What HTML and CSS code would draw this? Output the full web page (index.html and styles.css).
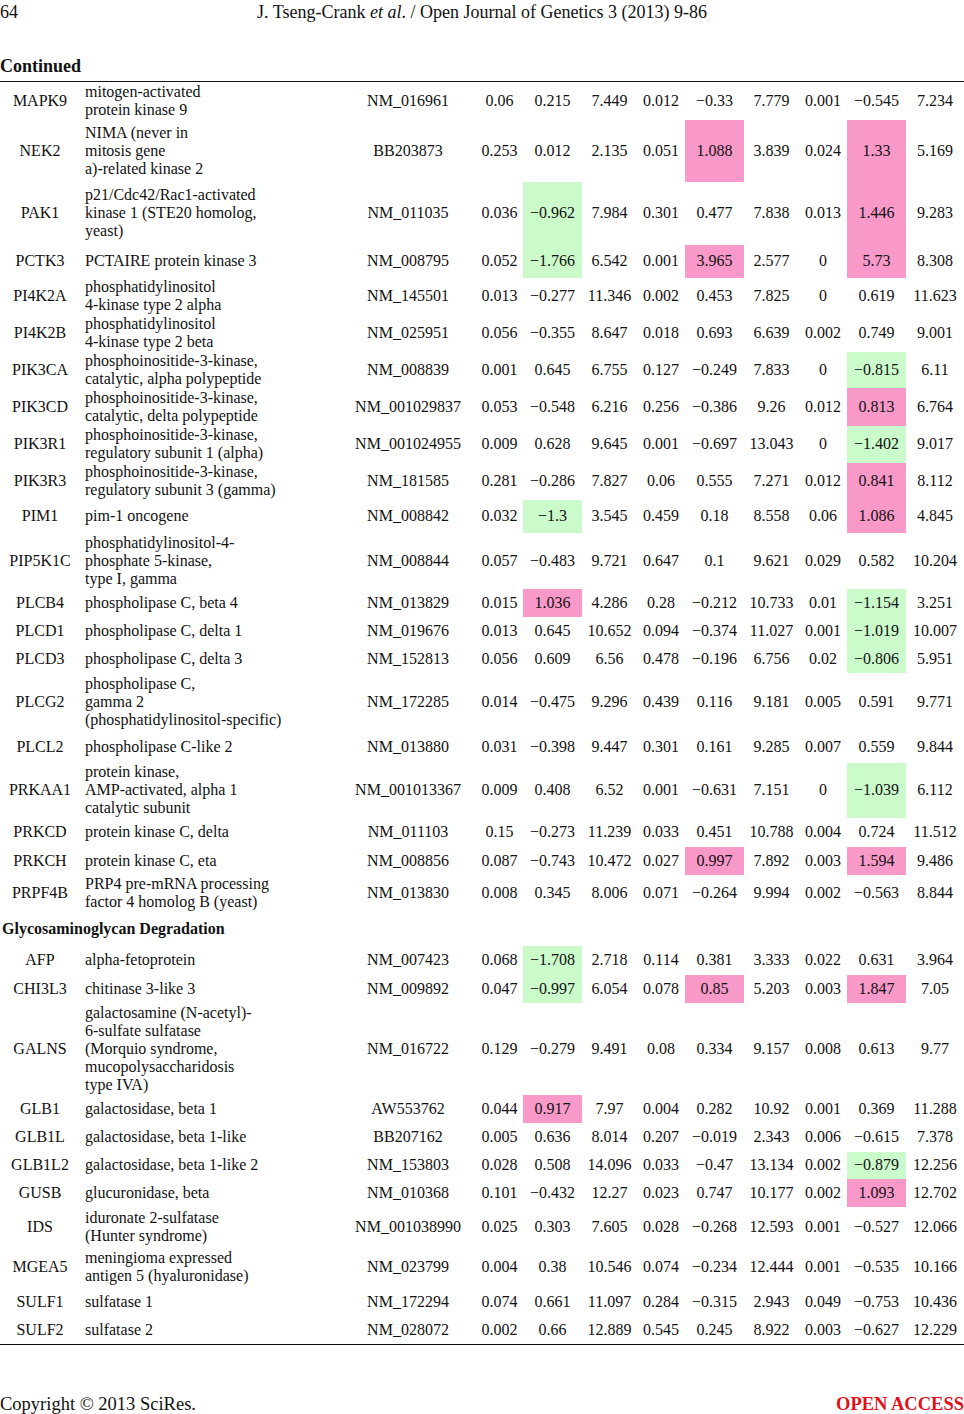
FILE: index.html
```html
<!DOCTYPE html>
<html lang="en">
<head>
<meta charset="utf-8">
<title>J. Tseng-Crank et al. / Open Journal of Genetics 3 (2013) 9-86</title>
<link rel="stylesheet" href="styles.css">
</head>
<body>
<header class="running-head">
  <span class="page-no">64</span>
  <span class="journal">J. Tseng-Crank <i>et al</i>. / Open Journal of Genetics 3 (2013) 9-86</span>
  <span></span>
</header>
<div class="caption">Continued</div>
<table class="data">
  <colgroup>
    <col class="c-gene"><col class="c-desc"><col class="c-acc"><col class="c-v1">
    <col class="c-v2"><col class="c-v3"><col class="c-v4"><col class="c-v5">
    <col class="c-v6"><col class="c-v7"><col class="c-v8"><col class="c-v9">
  </colgroup>
  <tbody>
    <tr class="h38"><td class="gene">MAPK9</td><td class="desc">mitogen-activated<br>protein kinase 9</td><td>NM_016961</td><td class="v1">0.06</td><td>0.215</td><td>7.449</td><td>0.012</td><td>−0.33</td><td>7.779</td><td>0.001</td><td>−0.545</td><td>7.234</td></tr>
    <tr class="h62"><td class="gene">NEK2</td><td class="desc">NIMA (never in<br>mitosis gene<br>a)-related kinase 2</td><td>BB203873</td><td class="v1">0.253</td><td>0.012</td><td>2.135</td><td>0.051</td><td class="up">1.088</td><td>3.839</td><td>0.024</td><td class="up">1.33</td><td>5.169</td></tr>
    <tr class="h63"><td class="gene">PAK1</td><td class="desc">p21/Cdc42/Rac1-activated<br>kinase 1 (STE20 homolog,<br>yeast)</td><td>NM_011035</td><td class="v1">0.036</td><td class="dn">−0.962</td><td>7.984</td><td>0.301</td><td>0.477</td><td>7.838</td><td>0.013</td><td class="up">1.446</td><td>9.283</td></tr>
    <tr class="h33"><td class="gene">PCTK3</td><td class="desc">PCTAIRE protein kinase 3</td><td>NM_008795</td><td class="v1">0.052</td><td class="dn">−1.766</td><td>6.542</td><td>0.001</td><td class="up">3.965</td><td>2.577</td><td>0</td><td class="up">5.73</td><td>8.308</td></tr>
    <tr class="h37"><td class="gene">PI4K2A</td><td class="desc">phosphatidylinositol<br>4-kinase type 2 alpha</td><td>NM_145501</td><td class="v1">0.013</td><td>−0.277</td><td>11.346</td><td>0.002</td><td>0.453</td><td>7.825</td><td>0</td><td>0.619</td><td>11.623</td></tr>
    <tr class="h37"><td class="gene">PI4K2B</td><td class="desc">phosphatidylinositol<br>4-kinase type 2 beta</td><td>NM_025951</td><td class="v1">0.056</td><td>−0.355</td><td>8.647</td><td>0.018</td><td>0.693</td><td>6.639</td><td>0.002</td><td>0.749</td><td>9.001</td></tr>
    <tr class="h36"><td class="gene">PIK3CA</td><td class="desc">phosphoinositide-3-kinase,<br>catalytic, alpha polypeptide</td><td>NM_008839</td><td class="v1">0.001</td><td>0.645</td><td>6.755</td><td>0.127</td><td>−0.249</td><td>7.833</td><td>0</td><td class="dn">−0.815</td><td>6.11</td></tr>
    <tr class="h38"><td class="gene">PIK3CD</td><td class="desc">phosphoinositide-3-kinase,<br>catalytic, delta polypeptide</td><td>NM_001029837</td><td class="v1">0.053</td><td>−0.548</td><td>6.216</td><td>0.256</td><td>−0.386</td><td>9.26</td><td>0.012</td><td class="up">0.813</td><td>6.764</td></tr>
    <tr class="h37"><td class="gene">PIK3R1</td><td class="desc">phosphoinositide-3-kinase,<br>regulatory subunit 1 (alpha)</td><td>NM_001024955</td><td class="v1">0.009</td><td>0.628</td><td>9.645</td><td>0.001</td><td>−0.697</td><td>13.043</td><td>0</td><td class="dn">−1.402</td><td>9.017</td></tr>
    <tr class="h37"><td class="gene">PIK3R3</td><td class="desc">phosphoinositide-3-kinase,<br>regulatory subunit 3 (gamma)</td><td>NM_181585</td><td class="v1">0.281</td><td>−0.286</td><td>7.827</td><td>0.06</td><td>0.555</td><td>7.271</td><td>0.012</td><td class="up">0.841</td><td>8.112</td></tr>
    <tr class="h33"><td class="gene">PIM1</td><td class="desc">pim-1 oncogene</td><td>NM_008842</td><td class="v1">0.032</td><td class="dn">−1.3</td><td>3.545</td><td>0.459</td><td>0.18</td><td>8.558</td><td>0.06</td><td class="up">1.086</td><td>4.845</td></tr>
    <tr class="h56"><td class="gene">PIP5K1C</td><td class="desc">phosphatidylinositol-4-<br>phosphate 5-kinase,<br>type I, gamma</td><td>NM_008844</td><td class="v1">0.057</td><td>−0.483</td><td>9.721</td><td>0.647</td><td>0.1</td><td>9.621</td><td>0.029</td><td>0.582</td><td>10.204</td></tr>
    <tr class="h28"><td class="gene">PLCB4</td><td class="desc">phospholipase C, beta 4</td><td>NM_013829</td><td class="v1">0.015</td><td class="up">1.036</td><td>4.286</td><td>0.28</td><td>−0.212</td><td>10.733</td><td>0.01</td><td class="dn">−1.154</td><td>3.251</td></tr>
    <tr class="h28"><td class="gene">PLCD1</td><td class="desc">phospholipase C, delta 1</td><td>NM_019676</td><td class="v1">0.013</td><td>0.645</td><td>10.652</td><td>0.094</td><td>−0.374</td><td>11.027</td><td>0.001</td><td class="dn">−1.019</td><td>10.007</td></tr>
    <tr class="h28"><td class="gene">PLCD3</td><td class="desc">phospholipase C, delta 3</td><td>NM_152813</td><td class="v1">0.056</td><td>0.609</td><td>6.56</td><td>0.478</td><td>−0.196</td><td>6.756</td><td>0.02</td><td class="dn">−0.806</td><td>5.951</td></tr>
    <tr class="h58"><td class="gene">PLCG2</td><td class="desc">phospholipase C,<br>gamma 2<br>(phosphatidylinositol-specific)</td><td>NM_172285</td><td class="v1">0.014</td><td>−0.475</td><td>9.296</td><td>0.439</td><td>0.116</td><td>9.181</td><td>0.005</td><td>0.591</td><td>9.771</td></tr>
    <tr class="h32"><td class="gene">PLCL2</td><td class="desc">phospholipase C-like 2</td><td>NM_013880</td><td class="v1">0.031</td><td>−0.398</td><td>9.447</td><td>0.301</td><td>0.161</td><td>9.285</td><td>0.007</td><td>0.559</td><td>9.844</td></tr>
    <tr class="h55"><td class="gene">PRKAA1</td><td class="desc">protein kinase,<br>AMP-activated, alpha 1<br>catalytic subunit</td><td>NM_001013367</td><td class="v1">0.009</td><td>0.408</td><td>6.52</td><td>0.001</td><td>−0.631</td><td>7.151</td><td>0</td><td class="dn">−1.039</td><td>6.112</td></tr>
    <tr class="h29"><td class="gene">PRKCD</td><td class="desc">protein kinase C, delta</td><td>NM_011103</td><td class="v1">0.15</td><td>−0.273</td><td>11.239</td><td>0.033</td><td>0.451</td><td>10.788</td><td>0.004</td><td>0.724</td><td>11.512</td></tr>
    <tr class="h28"><td class="gene">PRKCH</td><td class="desc">protein kinase C, eta</td><td>NM_008856</td><td class="v1">0.087</td><td>−0.743</td><td>10.472</td><td>0.027</td><td class="up">0.997</td><td>7.892</td><td>0.003</td><td class="up">1.594</td><td>9.486</td></tr>
    <tr class="h37"><td class="gene">PRPF4B</td><td class="desc">PRP4 pre-mRNA processing<br>factor 4 homolog B (yeast)</td><td>NM_013830</td><td class="v1">0.008</td><td>0.345</td><td>8.006</td><td>0.071</td><td>−0.264</td><td>9.994</td><td>0.002</td><td>−0.563</td><td>8.844</td></tr>
    <tr class="h34 section"><td colspan="12">Glycosaminoglycan Degradation</td></tr>
    <tr class="h29"><td class="gene">AFP</td><td class="desc">alpha-fetoprotein</td><td>NM_007423</td><td class="v1">0.068</td><td class="dn">−1.708</td><td>2.718</td><td>0.114</td><td>0.381</td><td>3.333</td><td>0.022</td><td>0.631</td><td>3.964</td></tr>
    <tr class="h28"><td class="gene">CHI3L3</td><td class="desc">chitinase 3-like 3</td><td>NM_009892</td><td class="v1">0.047</td><td class="dn">−0.997</td><td>6.054</td><td>0.078</td><td class="up">0.85</td><td>5.203</td><td>0.003</td><td class="up">1.847</td><td>7.05</td></tr>
    <tr class="h92"><td class="gene">GALNS</td><td class="desc">galactosamine (N-acetyl)-<br>6-sulfate sulfatase<br>(Morquio syndrome,<br>mucopolysaccharidosis<br>type IVA)</td><td>NM_016722</td><td class="v1">0.129</td><td>−0.279</td><td>9.491</td><td>0.08</td><td>0.334</td><td>9.157</td><td>0.008</td><td>0.613</td><td>9.77</td></tr>
    <tr class="h28"><td class="gene">GLB1</td><td class="desc">galactosidase, beta 1</td><td>AW553762</td><td class="v1">0.044</td><td class="up">0.917</td><td>7.97</td><td>0.004</td><td>0.282</td><td>10.92</td><td>0.001</td><td>0.369</td><td>11.288</td></tr>
    <tr class="h29"><td class="gene">GLB1L</td><td class="desc">galactosidase, beta 1-like</td><td>BB207162</td><td class="v1">0.005</td><td>0.636</td><td>8.014</td><td>0.207</td><td>−0.019</td><td>2.343</td><td>0.006</td><td>−0.615</td><td>7.378</td></tr>
    <tr class="h27"><td class="gene">GLB1L2</td><td class="desc">galactosidase, beta 1-like 2</td><td>NM_153803</td><td class="v1">0.028</td><td>0.508</td><td>14.096</td><td>0.033</td><td>−0.47</td><td>13.134</td><td>0.002</td><td class="dn">−0.879</td><td>12.256</td></tr>
    <tr class="h28"><td class="gene">GUSB</td><td class="desc">glucuronidase, beta</td><td>NM_010368</td><td class="v1">0.101</td><td>−0.432</td><td>12.27</td><td>0.023</td><td>0.747</td><td>10.177</td><td>0.002</td><td class="up">1.093</td><td>12.702</td></tr>
    <tr class="h40"><td class="gene">IDS</td><td class="desc">iduronate 2-sulfatase<br>(Hunter syndrome)</td><td>NM_001038990</td><td class="v1">0.025</td><td>0.303</td><td>7.605</td><td>0.028</td><td>−0.268</td><td>12.593</td><td>0.001</td><td>−0.527</td><td>12.066</td></tr>
    <tr class="h41"><td class="gene">MGEA5</td><td class="desc">meningioma expressed<br>antigen 5 (hyaluronidase)</td><td>NM_023799</td><td class="v1">0.004</td><td>0.38</td><td>10.546</td><td>0.074</td><td>−0.234</td><td>12.444</td><td>0.001</td><td>−0.535</td><td>10.166</td></tr>
    <tr class="h28"><td class="gene">SULF1</td><td class="desc">sulfatase 1</td><td>NM_172294</td><td class="v1">0.074</td><td>0.661</td><td>11.097</td><td>0.284</td><td>−0.315</td><td>2.943</td><td>0.049</td><td>−0.753</td><td>10.436</td></tr>
    <tr class="h29"><td class="gene">SULF2</td><td class="desc">sulfatase 2</td><td>NM_028072</td><td class="v1">0.002</td><td>0.66</td><td>12.889</td><td>0.545</td><td>0.245</td><td>8.922</td><td>0.003</td><td>−0.627</td><td>12.229</td></tr>
  </tbody>
</table>
<footer class="page-foot">
  <span class="copyright">Copyright © 2013 SciRes.</span>
  <span class="oa">OPEN ACCESS</span>
</footer>
</body>
</html>
```

FILE: styles.css
```css
html, body {
  margin: 0;
  padding: 0;
  background: #fff;
}
body {
  width: 964px;
  font-family: "Liberation Serif", "Times New Roman", serif;
  color: #111;
}
.running-head {
  display: grid;
  grid-template-columns: 1fr auto 1fr;
  align-items: center;
  height: 24px;
  font-size: 18px;
  line-height: 24px;
}
.caption {
  margin-top: 31px;
  font-weight: bold;
  font-size: 18px;
  line-height: 22px;
  height: 22px;
}
.data {
  margin-top: 4px;
  width: 964px;
  table-layout: fixed;
  border-collapse: collapse;
  border-top: 1px solid #111;
  border-bottom: 1.5px solid #111;
  font-size: 16px;
  line-height: 18px;
}
.data td {
  padding: 0;
  text-align: center;
  vertical-align: middle;
  white-space: nowrap;
}
.data td.desc {
  text-align: left;
  padding-left: 5px;
}
.data td.v1 {
  padding-left: 6px;
}
.data td.up { background: #f899c9; }
.data td.dn { background: #ccfbcb; }
.data tr.section td {
  text-align: left;
  font-weight: bold;
  padding-left: 2px;
}
.c-gene { width: 80px; }
.c-desc { width: 266px; }
.c-acc { width: 124px; }
.c-v1 { width: 53px; }
.c-v2 { width: 59px; }
.c-v3 { width: 55px; }
.c-v4 { width: 48px; }
.c-v5 { width: 59px; }
.c-v6 { width: 55px; }
.c-v7 { width: 48px; }
.c-v8 { width: 59px; }
.c-v9 { width: 58px; }
.h27 { height: 27px; }
.h28 { height: 28px; }
.h29 { height: 29px; }
.h32 { height: 32px; }
.h33 { height: 33px; }
.h34 { height: 34px; }
.h36 { height: 36px; }
.h37 { height: 37px; }
.h38 { height: 38px; }
.h40 { height: 40px; }
.h41 { height: 41px; }
.h55 { height: 55px; }
.h56 { height: 56px; }
.h58 { height: 58px; }
.h62 { height: 62px; }
.h63 { height: 63px; }
.h92 { height: 92px; }
.page-foot {
  margin-top: 47px;
  display: flex;
  justify-content: space-between;
  font-size: 18.5px;
  line-height: 24px;
}
.oa {
  color: #e0111b;
  font-weight: bold;
}
```
